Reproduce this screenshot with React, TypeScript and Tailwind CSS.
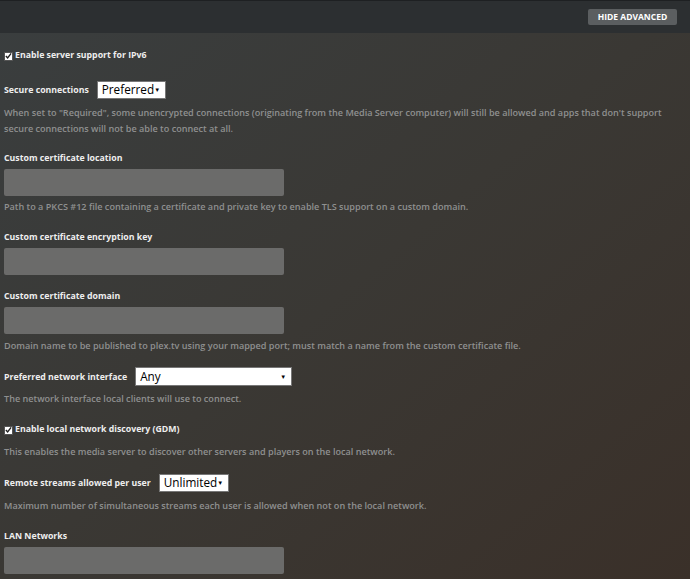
import React from "react";

const font = { fontFamily: '"Open Sans", "Noto Sans", sans-serif' };

function Check({ label }: { label: string }) {
  return (
    <div className="flex items-center h-[16px] pt-[2px]">
      <span className="w-[9px] h-[9px] bg-white border border-[#555] flex items-center justify-center">
        <svg width="8" height="8" viewBox="0 0 8 8">
          <path d="M1 4 L3 6.2 L7 1" stroke="#222" strokeWidth="1.6" fill="none" />
        </svg>
      </span>
      <span className="ml-[2px] text-[8.75px] font-bold text-[#eeeeee]">{label}</span>
    </div>
  );
}

function Label({ children }: { children: React.ReactNode }) {
  return <div className="h-[16px] leading-[16px] text-[8.75px] font-bold text-[#eeeeee]">{children}</div>;
}

function Desc({ children }: { children: React.ReactNode }) {
  return <div className="leading-[16px] text-[9.1px] font-semibold text-[#8f9090] whitespace-nowrap">{children}</div>;
}

function Input() {
  return <div className="w-[280px] h-[27px] bg-[#6b6b6a] rounded-[2px]" />;
}

function Select({ value, w, h }: { value: string; w: string; h: string }) {
  return (
    <div className={`${w} ${h} bg-white border border-[#777] flex items-center justify-between pl-[4px] pr-[5px]`}>
      <span className="text-[11.75px] text-black leading-none" style={{ fontFamily: '"Open Sans", sans-serif' }}>{value}</span>
      <span className="text-[6px] text-black leading-none">▼</span>
    </div>
  );
}

export default function App() {
  return (
    <div className="w-[690px] h-[579px] overflow-hidden bg-gradient-to-br from-[#3a3e3f] via-[#3a3834] to-[#3a3029]" style={font}>
      <div className="h-[33px] bg-[#2c2f31] border-t border-[#1e2022] flex items-center justify-end pr-[13px]">
        <div className="w-[89px] h-[16px] bg-[#5b5e60] rounded-[2px] flex items-center justify-center text-[8.5px] font-bold text-white">
          HIDE ADVANCED
        </div>
      </div>
      <div className="pl-[4px]">
        <div className="mt-[14px]"><Check label="Enable server support for IPv6" /></div>
        <div className="mt-[18px] flex items-center">
          <Label>Secure connections</Label>
          <div className="ml-[8px]"><Select value="Preferred" w="w-[69px]" h="h-[18px]" /></div>
        </div>
        <div className="mt-[6px]">
          <Desc>
            When set to "Required", some unencrypted connections (originating from the Media Server computer) will still be allowed and apps that don't support
            <br />
            secure connections will not be able to connect at all.
          </Desc>
        </div>
        <div className="mt-[13px]"><Label>Custom certificate location</Label></div>
        <div className="mt-[3px]"><Input /></div>
        <div className="mt-[3px]"><Desc>Path to a PKCS #12 file containing a certificate and private key to enable TLS support on a custom domain.</Desc></div>
        <div className="mt-[14px]"><Label>Custom certificate encryption key</Label></div>
        <div className="mt-[3px]"><Input /></div>
        <div className="mt-[13px]"><Label>Custom certificate domain</Label></div>
        <div className="mt-[3px]"><Input /></div>
        <div className="mt-[4px]"><Desc>Domain name to be published to plex.tv using your mapped port; must match a name from the custom certificate file.</Desc></div>
        <div className="mt-[13px] flex items-center">
          <Label>Preferred network interface</Label>
          <div className="ml-[8px]"><Select value="Any" w="w-[157px]" h="h-[19px]" /></div>
        </div>
        <div className="mt-[5px]"><Desc>The network interface local clients will use to connect.</Desc></div>
        <div className="mt-[14px]"><Check label="Enable local network discovery (GDM)" /></div>
        <div className="mt-[7px]"><Desc>This enables the media server to discover other servers and players on the local network.</Desc></div>
        <div className="mt-[14px] flex items-center">
          <Label>Remote streams allowed per user</Label>
          <div className="ml-[8px]"><Select value="Unlimited" w="w-[70px]" h="h-[18px]" /></div>
        </div>
        <div className="mt-[6px]"><Desc>Maximum number of simultaneous streams each user is allowed when not on the local network.</Desc></div>
        <div className="mt-[14px]"><Label>LAN Networks</Label></div>
        <div className="mt-[3px]"><Input /></div>
      </div>
    </div>
  );
}
